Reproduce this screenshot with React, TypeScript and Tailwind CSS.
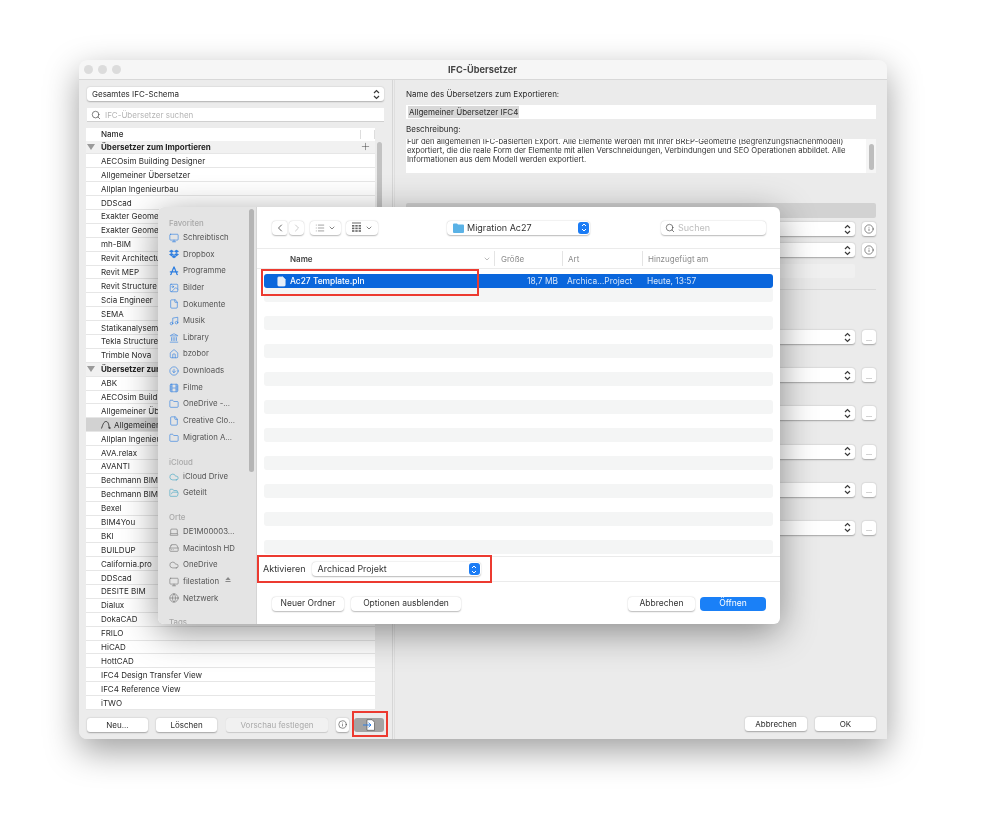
import React from "react";
import { FaDropbox } from "react-icons/fa";
import {
  ChevronDown, ChevronLeft, ChevronRight, Cloud, File, Film, Folder, FolderOpen, Globe, HardDrive, House,
  Image, Info, Landmark, Laptop, List, Monitor, Music, Plus, Search, CircleArrowDown,
} from "lucide-react";

const importers = ["AECOsim Building Designer","Allgemeiner Übersetzer","Allplan Ingenieurbau","DDScad","Exakter Geometrietransfer","Exakter Geometrietransfer","mh-BIM","Revit Architecture","Revit MEP","Revit Structure","Scia Engineer","SEMA","Statikanalysemodell","Tekla Structures","Trimble Nova"];
const exportersA = ["ABK","AECOsim Building Designer","Allgemeiner Übersetzer"];
const exportersB = ["Allplan Ingenieurbau","AVA.relax","AVANTI","Bechmann BIM","Bechmann BIM","Bexel","BIM4You","BKI","BUILDUP","California.pro","DDScad","DESITE BIM","Dialux","DokaCAD","FRILO","HiCAD","HottCAD","IFC4 Design Transfer View","IFC4 Reference View","iTWO"];

function Stepper() {
  return (
    <svg width="7" height="11" viewBox="0 0 7 11" fill="none" stroke="#3a3a3a" strokeWidth="1.2" className="shrink-0">
      <path d="M1 4 L3.5 1.5 L6 4" />
      <path d="M1 7 L3.5 9.5 L6 7" />
    </svg>
  );
}

function BlueStepper() {
  return (
    <span className="w-[11px] h-[12px] rounded-[3px] bg-[#1b7cf5] flex items-center justify-center shrink-0">
      <svg width="6" height="9" viewBox="0 0 6 9" fill="none" stroke="#ffffff" strokeWidth="1">
        <path d="M1 3 L3 1 L5 3" />
        <path d="M1 6 L3 8 L5 6" />
      </svg>
    </span>
  );
}

function Row({ children }: { children: React.ReactNode }) {
  return <div className="h-[13.9px] pl-[15px] flex items-center bg-white border-b border-[#e6e6e6] text-[#2a2a2a] whitespace-nowrap overflow-hidden">{children}</div>;
}

function Group({ label, plus }: { label: string; plus?: boolean }) {
  return (
    <div className="h-[13.9px] flex items-center bg-[#f1f1f1] border-b border-[#e6e6e6] relative">
      <svg width="8" height="6" viewBox="0 0 8 6" className="ml-[1px] mr-[6px]"><path d="M0 0 H8 L4 6 Z" fill="#9a9a9a" /></svg>
      <span className="font-bold text-[#1f1f1f]">{label}</span>
      {plus && <Plus size={11} strokeWidth={1} className="ml-auto mr-[4px] text-[#333]" />}
    </div>
  );
}

function Btn({ children, className }: { children: React.ReactNode; className: string }) {
  return <div className={"h-[14px] rounded-[3px] bg-white shadow-[0_0.5px_1.5px_rgba(0,0,0,0.3)] flex items-center justify-center text-[#2a2a2a] " + className}>{children}</div>;
}

function RightSelect({ dots = true, className }: { dots?: boolean; className: string }) {
  return (
    <div className={"flex items-center gap-[7px] " + className}>
      <div className="flex-1 h-[14px] rounded-[3px] bg-white shadow-[0_0.5px_1.5px_rgba(0,0,0,0.3)] flex items-center justify-end pr-[4px]"><Stepper /></div>
      {dots ? <Btn className="w-[14px]"><span className="text-[7px] text-[#666] leading-none pt-[2px]">...</span></Btn>
        : <Btn className="w-[14px]"><Info size={10} strokeWidth={1.3} /></Btn>}
    </div>
  );
}

function AppsIcon({ size, strokeWidth, className }: { size: number; strokeWidth: number; className: string }) {
  return (
    <svg width={size} height={size} viewBox="0 0 12 12" fill="none" stroke="currentColor" strokeWidth={strokeWidth} className={className}>
      <path d="M6 1 L2.5 9.5 M6 1 L9.5 9.5 M1 7 H11 M1.5 10.5 L3 9.5 M10.5 10.5 L9 9.5" />
    </svg>
  );
}

function GridIcon() {
  return (
    <svg width="11" height="11" viewBox="0 0 11 11" fill="#666">
      <rect x="1" y="0.5" width="9" height="1" />
      <rect x="1" y="3" width="2.4" height="1.6" /><rect x="4.3" y="3" width="2.4" height="1.6" /><rect x="7.6" y="3" width="2.4" height="1.6" />
      <rect x="1" y="5.6" width="2.4" height="1.6" /><rect x="4.3" y="5.6" width="2.4" height="1.6" /><rect x="7.6" y="5.6" width="2.4" height="1.6" />
      <rect x="1" y="8.2" width="2.4" height="1.6" /><rect x="4.3" y="8.2" width="2.4" height="1.6" /><rect x="7.6" y="8.2" width="2.4" height="1.6" />
    </svg>
  );
}

const side: { t: string; I: any }[] = [
  { t: "Schreibtisch", I: Monitor }, { t: "Dropbox", I: FaDropbox }, { t: "Programme", I: AppsIcon }, { t: "Bilder", I: Image },
  { t: "Dokumente", I: File }, { t: "Musik", I: Music }, { t: "Library", I: Landmark }, { t: "bzobor", I: House },
  { t: "Downloads", I: CircleArrowDown }, { t: "Filme", I: Film }, { t: "OneDrive -...", I: Folder }, { t: "Creative Clo...", I: File }, { t: "Migration A...", I: Folder },
];
const side2: { t: string; I: any; c: string }[] = [
  { t: "iCloud Drive", I: Cloud, c: "text-[#45a6c4]" }, { t: "Geteilt", I: FolderOpen, c: "text-[#45a6c4]" },
];
const side3: { t: string; I: any; c: string }[] = [
  { t: "DE1M00003...", I: Laptop, c: "text-[#777]" }, { t: "Macintosh HD", I: HardDrive, c: "text-[#777]" }, { t: "OneDrive", I: Cloud, c: "text-[#777]" }, { t: "filestation", I: Monitor, c: "text-[#777]" }, { t: "Netzwerk", I: Globe, c: "text-[#777]" },
];

function SideItem({ t, I, c }: { t: string; I: any; c: string }) {
  return (
    <div className="h-[16.65px] flex items-center gap-[3px] pl-[11px] whitespace-nowrap text-[#555]">
      <I size={10} strokeWidth={1.5} className={"shrink-0 " + c} />
      <span className="ml-[1px]">{t}</span>
      {t === "filestation" && <span className="text-[7px] text-[#888] ml-[3px]">⏏</span>}
    </div>
  );
}

function SideHead({ t, className }: { t: string; className: string }) {
  return <div className={"pl-[11px] h-[11px] flex items-center text-[#a8a8a8] font-medium " + className}>{t}</div>;
}

function ToolBtn({ children, className }: { children: React.ReactNode; className: string }) {
  return <div className={"h-[14px] rounded-[4px] bg-white shadow-[0_0.5px_1.5px_rgba(0,0,0,0.28)] flex items-center " + className}>{children}</div>;
}

function Dialog() {
  return (
    <div className="absolute left-[79px] top-[147px] w-[622px] h-[417px] rounded-[6px] overflow-hidden flex bg-white shadow-[0_8px_36px_rgba(0,0,0,0.42)] text-[8.5px]">
      <aside className="w-[99px] shrink-0 bg-[#e4e4e4] border-r border-[#d5d5d5] relative pt-[11.5px] overflow-hidden text-[7.8px]">
        <SideHead t="Favoriten" className="" />
        {side.map((s) => (
          <SideItem key={s.t} t={s.t} I={s.I} c="text-[#2f7fe0]" />
        ))}
        <SideHead t="iCloud" className="mt-[11.4px]" />
        {side2.map((s) => <SideItem key={s.t} {...s} />)}
        <SideHead t="Orte" className="mt-[11px]" />
        {side3.map((s) => <SideItem key={s.t} {...s} />)}
        <SideHead t="Tags" className="mt-[10.5px]" />
        <div className="absolute right-[2px] top-[2px] w-[5px] h-[263px] rounded-full bg-[#b5b5b5]" />
      </aside>
      <main className="flex-1 flex flex-col min-w-0">
        <div className="h-[42px] shrink-0 flex items-center pl-[15px] pr-[14px] border-b border-[#ebebeb]">
          <ToolBtn className="w-[15px] rounded-r-[2px] justify-center"><ChevronLeft size={12} strokeWidth={1.5} className="text-[#333]" /></ToolBtn>
          <ToolBtn className="w-[15px] ml-[2px] justify-center"><ChevronRight size={12} strokeWidth={1.5} className="text-[#bbb]" /></ToolBtn>
          <ToolBtn className="w-[31px] ml-[6px] gap-[3px] justify-center"><List size={10} strokeWidth={1.2} className="text-[#444]" /><ChevronDown size={8} strokeWidth={2} className="text-[#444]" /></ToolBtn>
          <ToolBtn className="w-[32px] ml-[5px] gap-[3px] justify-center"><GridIcon /><ChevronDown size={8} strokeWidth={2} className="text-[#444]" /></ToolBtn>
          <ToolBtn className="w-[143px] ml-[69px] justify-between pl-[6px] pr-[1px]">
            <span className="flex items-center gap-[3px] text-[9px] text-[#333]">
              <svg width="11" height="10" viewBox="0 0 11 10"><path d="M0 1.5 Q0 .5 1 .5 H4 L5 1.5 H10 Q11 1.5 11 2.5 V9 Q11 10 10 10 H1 Q0 10 0 9 Z" fill="#5ab2e6" /></svg>
              Migration Ac27
            </span>
            <BlueStepper />
          </ToolBtn>
          <ToolBtn className="w-[105px] ml-auto justify-start pl-[4px] gap-[3px]">
            <Search size={10} strokeWidth={1.6} className="text-[#444]" />
            <span className="text-[#bdbdbd] text-[9px]">Suchen</span>
          </ToolBtn>
        </div>
        <div className="h-[20px] shrink-0 flex items-center pt-[1px] text-[8px] border-b border-[#ebebeb] relative text-[#8a8a8a]">
          <span className="ml-[33px] font-semibold text-[#444]">Name</span>
          <ChevronDown size={8} className="absolute left-[226px] top-[6px] text-[#999]" />
          <span className="absolute left-[237px] top-[2px] bottom-[2px] w-px bg-[#e4e4e4]" />
          <span className="absolute left-[244px]">Größe</span>
          <span className="absolute left-[305px] top-[2px] bottom-[2px] w-px bg-[#e4e4e4]" />
          <span className="absolute left-[311px]">Art</span>
          <span className="absolute left-[385px] top-[2px] bottom-[2px] w-px bg-[#e4e4e4]" />
          <span className="absolute left-[391px]">Hinzugefügt am</span>
        </div>
        <div className="flex-1 px-[7px] pt-[5px] flex flex-col overflow-hidden">
          <div className="h-[14px] shrink-0 rounded-[3px] bg-[#0a66dc] text-white flex items-center relative text-[8.4px]">
            <File size={11} strokeWidth={1.5} fill="#e6eef8" className="absolute left-[12px] text-[#e6eef8]" />
            <span className="ml-[26px] font-medium">Ac27 Template.pln</span>
            <span className="absolute right-[215px] text-[#d6e5f9]">18,7 MB</span>
            <span className="absolute left-[303px] text-[#d6e5f9]">Archica...Project</span>
            <span className="absolute left-[383px] text-[#d6e5f9]">Heute, 13:57</span>
          </div>
          {[0,1,2,3,4,5,6,7,8,9].map((i) => (
            <div key={i} className="h-[14px] shrink-0 mb-[14px] rounded-[3px] bg-[#f4f5f5]" />
          ))}
        </div>
        <div className="h-[26px] shrink-0 flex items-center pl-[6px] border-t border-b border-[#ebebeb] text-[9px] text-[#333]">
          <span>Aktivieren</span>
          <ToolBtn className="w-[169px] ml-[6px] justify-between pl-[6px] pr-[1px]">
            <span className="text-[8.9px] text-[#333]">Archicad Projekt</span>
            <BlueStepper />
          </ToolBtn>
        </div>
        <div className="h-[42px] shrink-0 flex items-center pl-[15px] pr-[14px] pt-[1px] text-[8.5px] text-[#333]">
          <ToolBtn className="w-[72px] justify-center">Neuer Ordner</ToolBtn>
          <ToolBtn className="w-[110px] ml-[7px] justify-center">Optionen ausblenden</ToolBtn>
          <ToolBtn className="w-[67px] ml-auto justify-center">Abbrechen</ToolBtn>
          <div className="w-[66px] h-[14px] ml-[5px] rounded-[4px] bg-[#1a80f7] text-white flex items-center justify-center">Öffnen</div>
        </div>
      </main>
    </div>
  );
}

export default function App() {
  return (
    <div className="w-[999px] h-[837px] bg-white pt-[60px] pl-[79px] overflow-hidden blur-[0.4px] font-['Inter',sans-serif]">
      <div className="relative w-[808px] h-[679px] rounded-[8px] bg-[#ececec] shadow-[0_12px_34px_rgba(0,0,0,0.38)] flex flex-col text-[8px] text-[#2a2a2a]">
        <header className="h-[20px] shrink-0 rounded-t-[8px] bg-[#f6f6f6] border-b border-[#d8d8d8] flex items-center relative">
          <div className="flex gap-[5px] pl-[5px]">
            <span className="w-[9px] h-[9px] rounded-full bg-[#dcdcdc]" />
            <span className="w-[9px] h-[9px] rounded-full bg-[#dcdcdc]" />
            <span className="w-[9px] h-[9px] rounded-full bg-[#dcdcdc]" />
          </div>
          <span className="flex-1 text-center font-bold text-[9.2px] text-[#444]">IFC-Übersetzer</span>
          <span className="w-[43px]" />
        </header>
        <div className="flex-1 flex min-h-0">
          <section className="w-[314px] shrink-0 border-r border-[#d6d6d6] bg-[#ececec] pl-[8px] pr-[8px] flex flex-col relative overflow-hidden rounded-bl-[8px]">
            <div className="mt-[7px] h-[14px] rounded-[3px] bg-white shadow-[0_0.5px_1.5px_rgba(0,0,0,0.25)] flex items-center justify-between pl-[5px] pr-[4px]">
              <span>Gesamtes IFC-Schema</span><Stepper />
            </div>
            <div className="mt-[7px] h-[14px] bg-white border-b border-[#d0d0d0] flex items-center gap-[4px] pl-[4px]">
              <Search size={10} strokeWidth={1.6} className="text-[#444]" />
              <span className="text-[#b5b5b5]">IFC-Übersetzer suchen</span>
            </div>
            <div className="mt-[6px] -ml-[1px] w-[289px] h-[12.5px] bg-white flex items-center pl-[15px] relative font-medium">
              Name
              <span className="absolute left-[274px] top-[2px] bottom-[2px] w-px bg-[#ddd]" />
              <span className="absolute left-[288px] top-[2px] bottom-[2px] w-px bg-[#ddd]" />
            </div>
            <div className="-ml-[1px] w-[289px] text-[8px]">
              <Group label="Übersetzer zum Importieren" plus />
              {importers.map((n, i) => <Row key={i}>{n}</Row>)}
              <Group label="Übersetzer zum Exportieren" />
              {exportersA.map((n, i) => <Row key={i}>{n}</Row>)}
              <div className="h-[13.9px] pl-[15px] flex items-center gap-[2px] bg-[#d2d2d2] border-b border-[#e6e6e6] whitespace-nowrap">
                <svg width="11" height="8" viewBox="0 0 11 8" fill="none" stroke="#333" strokeWidth="0.9"><path d="M0.5 7.5 C2 3 3 0.5 5 0.5 C7 0.5 8 3 8 7" /><circle cx="8.6" cy="7" r="0.7" /></svg>
                Allgemeiner Übersetzer IFC4
              </div>
              {exportersB.map((n, i) => <Row key={i}>{n}</Row>)}
            </div>
            <div className="absolute left-[298px] top-[62px] w-[5px] h-[208px] rounded-full bg-[#c2c2c2]" />
            <div className="absolute left-[8px] right-0 bottom-0 h-[28px] bg-[#ececec] flex items-center pb-[1px]">
              <Btn className="w-[61px]">Neu...</Btn>
              <Btn className="w-[61px] ml-[8px]">Löschen</Btn>
              <div className="w-[102px] h-[14px] ml-[9px] rounded-[3px] bg-[#f1f1f1] text-[#aaa] flex items-center justify-center shadow-[0_0.5px_1px_rgba(0,0,0,0.15)]">Vorschau festlegen</div>
              <Btn className="w-[13px] ml-[8px]"><Info size={9} strokeWidth={1.4} /></Btn>
              <div className="w-[30px] h-[14px] ml-[5px] rounded-[3px] bg-[#a3a3a3] flex items-center justify-center relative">
                <svg width="16" height="12" viewBox="0 0 16 12" fill="none">
                  <path d="M6 0.7 H11 L13.5 3.2 V11.3 H6 Z" fill="#ffffff" stroke="#444" strokeWidth="0.6" />
                  <path d="M2 6 H10 M7.5 3.8 L10 6 L7.5 8.2" stroke="#2f7fe0" strokeWidth="1" />
                </svg>
              </div>
            </div>
          </section>
          <section className="flex-1 min-w-0 bg-[#ebebeb] border-l border-[#dfdfdf] ml-[1px] pl-[11px] pr-[11px] flex flex-col">
            <div className="mt-[9px] h-[10px] flex items-center">Name des Übersetzers zum Exportieren:</div>
            <div className="mt-[6px] h-[14px] bg-white flex items-center pl-[2px] text-[8px]">
              <span className="bg-[#d8d8d8] px-[1px]">Allgemeiner Übersetzer IFC4</span>
            </div>
            <div className="mt-[5px] h-[10px] flex items-center">Beschreibung:</div>
            <div className="mt-[5px] h-[34px] bg-white flex overflow-hidden">
              <p className="flex-1 pl-[1px] pr-[6px] -mt-[2.5px] leading-[9.3px] text-[7.7px] text-[#333]">Für den allgemeinen IFC-basierten Export. Alle Elemente werden mit ihrer BREP-Geometrie (Begrenzungsflächenmodell) exportiert, die die reale Form der Elemente mit allen Verschneidungen, Verbindungen und SEO Operationen abbildet. Alle Informationen aus dem Modell werden exportiert.</p>
              <div className="w-[10px] shrink-0 bg-[#f5f5f5] flex justify-center pt-[5px]"><div className="w-[5px] h-[26px] rounded-full bg-[#bdbdbd]" /></div>
            </div>
            <div className="mt-[30px] h-[15px] rounded-[2px] bg-[#d2d2d2]" />
            <RightSelect dots={false} className="mt-[4px]" />
            <RightSelect dots={false} className="mt-[7px]" />
            <div className="mt-[7px] mr-[21px] h-[14px] rounded-[2px] bg-[#f0f0f0]" />
            <div className="mt-[11px] h-px bg-[#d9d9d9]" />
            <RightSelect className="mt-[40px]" />
            <RightSelect className="mt-[24.2px]" />
            <RightSelect className="mt-[24.2px]" />
            <RightSelect className="mt-[24.2px]" />
            <RightSelect className="mt-[24.2px]" />
            <RightSelect className="mt-[24.2px]" />
            <div className="mt-auto mb-[8px] flex justify-end gap-[8px]">
              <Btn className="w-[62px]">Abbrechen</Btn>
              <Btn className="w-[61px]">OK</Btn>
            </div>
          </section>
        </div>
        <Dialog />
        <div className="absolute left-[182px] top-[209px] w-[218px] h-[27px] border-2 border-[#ec3a30]" />
        <div className="absolute left-[178px] top-[495px] w-[235px] h-[28px] border-2 border-[#ec3a30]" />
        <div className="absolute left-[273px] top-[651px] w-[36px] h-[26px] border-2 border-[#ec3a30]" />
      </div>
    </div>
  );
}
